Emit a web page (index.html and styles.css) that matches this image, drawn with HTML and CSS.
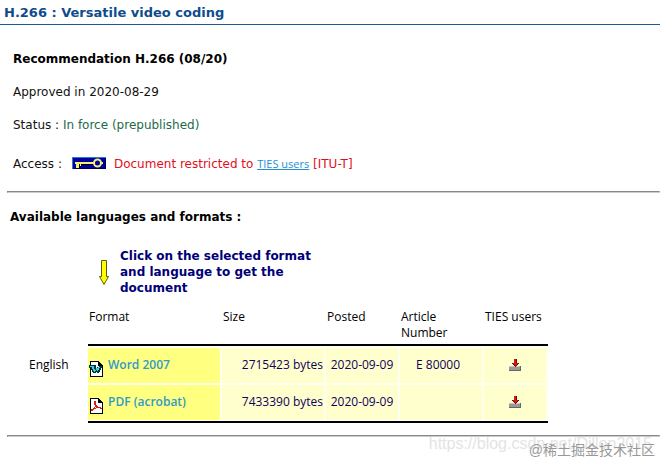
FILE: index.html
```
<!DOCTYPE html>
<html lang="en">
<head>
<meta charset="utf-8">
<title>H.266 : Versatile video coding</title>
<link rel="stylesheet" href="styles.css">
</head>
<body>
<h1 class="title">H.266 : Versatile video coding</h1>
<main>
  <section class="summary">
    <h2>Recommendation H.266 (08/20)</h2>
    <p>Approved in 2020-08-29</p>
    <p>Status : <span class="status">In force (prepublished)</span></p>
    <p class="access">
      <span>Access :</span>
      <svg class="key" viewBox="0 0 34 12" shape-rendering="crispEdges" aria-hidden="true">
        <path fill="#0000a0" d="M0 0h34v12H0z"/>
        <path fill="#2a7ad8" d="M0 0h34v1H0zM0 1h1v11H0z"/>
        <path fill="#00004c" d="M33 1h1v11h-1zM1 11h33v1H1z"/>
        <path fill="#000" d="M5 7h17v1H5zM7 8h1v3H7z"/>
        <path fill="#f4f070" d="M3 5h19v2H3zM4 7h3v4H4zM8 7h1v2H8z"/>
        <ellipse cx="25.500" cy="6" rx="3.500" ry="3.500" fill="none" stroke="#f4f070" stroke-width="2" shape-rendering="auto"/>
        <path fill="#f4f070" d="M29 5h2v2h-2z"/>
      </svg>
      <span class="restricted">Document restricted to <a class="ties" href="#">TIES users</a> [ITU-T]</span>
    </p>
  </section>
  <hr>
  <section class="formats">
    <h2>Available languages and formats :</h2>
    <div class="hint">
      <svg class="arrow" viewBox="0 0 12 25" aria-hidden="true">
        <path d="M3.500 .5h5v16h2L6 24.500 1.500 16.500h2z" fill="#ff0" stroke="#5c5c10"/>
      </svg>
      <p>Click on the selected format and language to get the document</p>
    </div>
    <div class="listing">
      <span class="language">English</span>
      <table>
        <colgroup><col class="c-format"><col class="c-size"><col class="c-posted"><col class="c-article"><col class="c-ties"></colgroup>
        <thead>
          <tr><th>Format</th><th>Size</th><th>Posted</th><th>Article Number</th><th>TIES users</th></tr>
        </thead>
        <tbody>
          <tr>
            <td class="format"><a href="#">
              <svg class="file" viewBox="0 0 14 16" shape-rendering="crispEdges" aria-hidden="true">
                <path fill="#000" d="M1 0h9v1h1v1h1v1h1v1h1v12H1z"/>
                <path fill="#fff" d="M2 1h7v4h4v10H2z"/>
                <path fill="#000" d="M9 1h1v3h3v1H9z"/>
                <path fill="#033" d="M0 4h7v3h1V6h2V5h3v2h-1v2h-1v2h-1v1H8v-1H7v1H4v-1H3V9H2V7H0z"/>
                <path fill="#2fdada" d="M1 5h4v3h1v1h1V7h2V6h2v1h-1v2H9v1H8V9H7v1H6v1H5v-1H4V8H3V6H1z"/>
              </svg>Word 2007</a></td>
            <td class="size">2715423 bytes</td><td class="center">2020-09-09</td><td class="article">E 80000</td>
            <td class="center"><a href="#" aria-label="Download Word 2007">
              <svg class="download" viewBox="0 0 12 12" shape-rendering="crispEdges" aria-hidden="true">
                <path fill="#999" d="M0 7h12v4H0z"/><path fill="#c8c8c8" d="M0 7h12v1H0z"/><path fill="#666" d="M0 11h12v1H0zM11 7h1v5h-1z"/>
                <path fill="#700" d="M5 0h3v4h2v1H9v1H8v1H7v1H6V7H5V6H4V5H3V4h2z"/><path fill="#d01818" d="M5 0h2v4h2v1H8v1H7v1H6V6H5V5H4V4h1z"/>
              </svg></a></td>
          </tr>
          <tr>
            <td class="format"><a href="#">
              <svg class="file" viewBox="0 0 14 16" shape-rendering="crispEdges" aria-hidden="true">
                <path fill="#000" d="M1 0h9v1h1v1h1v1h1v1h1v12H1z"/>
                <path fill="#fff" d="M2 1h7v4h4v10H2z"/>
                <path fill="#000" d="M9 1h1v3h3v1H9z"/>
                <path fill="#e01818" d="M5 3h2v4h1v1h1v1h3v1h1v1h-2v-1H7v1H5v1H4v1H2v-2h2v-1h1V9h1V7H5z"/>
                <path fill="#fff" d="M6 9h1v1H6z"/>
              </svg>PDF (acrobat)</a></td>
            <td class="size">7433390 bytes</td><td class="center">2020-09-09</td><td></td>
            <td class="center"><a href="#" aria-label="Download PDF">
              <svg class="download" viewBox="0 0 12 12" shape-rendering="crispEdges" aria-hidden="true">
                <path fill="#999" d="M0 7h12v4H0z"/><path fill="#c8c8c8" d="M0 7h12v1H0z"/><path fill="#666" d="M0 11h12v1H0zM11 7h1v5h-1z"/>
                <path fill="#700" d="M5 0h3v4h2v1H9v1H8v1H7v1H6V7H5V6H4V5H3V4h2z"/><path fill="#d01818" d="M5 0h2v4h2v1H8v1H7v1H6V6H5V5H4V4h1z"/>
              </svg></a></td>
          </tr>
        </tbody>
      </table>
    </div>
  </section>
  <hr>
</main>
<div class="mark blog">https://blog.csdn.net/Dillon2015</div>
<div class="mark community">@稀土掘金技术社区</div>
</body>
</html>
```
FILE: styles.css
```
* { box-sizing: border-box; }
body {
  position: relative;
  margin: 0;
  min-height: 100vh;
  background: #fff;
  color: #111;
  font: 12px/16px "DejaVu Sans", Verdana, sans-serif;
}
h1, h2, p { margin: 0; font-size: 12px; }
a { color: #2f9bc9; text-decoration: none; }
.title {
  padding: 5px 4px 3px;
  border-bottom: 1px solid #1c5a96;
  color: #0f4c8c;
  font-size: 13px;
}
main { padding-left: 7px; }
h2 { color: #000; }
.summary {
  display: flex;
  flex-direction: column;
  gap: 17px;
  padding: 26px 6px 19px;
}
.status { color: #1d6a48; }
.access { display: flex; align-items: center; padding-top: 6px; }
.key { width: 34px; height: 12px; margin: 0 8px 2px 10px; }
.restricted { color: #e01020; }
.ties {
  color: #1c90d4;
  font-family: "Trebuchet MS", "Open Sans", sans-serif;
  font-size: 11px;
  text-decoration: underline;
}
hr { margin: 0; border: 1px solid; border-color: #888 #ccc #ccc #888; }
.formats { padding: 16px 3px 12px; }
.hint {
  display: flex;
  align-items: center;
  gap: 10px;
  padding: 23px 0 13px 88px;
}
.arrow { width: 12px; height: 25px; }
.hint p { max-width: 200px; color: #000078; font-weight: bold; }
.listing {
  display: flex;
  align-items: flex-start;
  font-family: "Trebuchet MS", "Open Sans", sans-serif;
  font-weight: 500;
}
.language { width: 78px; padding: 48px 0 0 19px; color: #000; }
table {
  width: 460px;
  table-layout: fixed;
  border-spacing: 0;
  padding-bottom: 1px;
  border-bottom: 2px solid #000;
}
.c-format { width: 134px; }
.c-size { width: 104px; }
.c-posted { width: 74px; }
.c-article { width: 84px; }
th {
  height: 37px;
  padding: 0 1px;
  border-bottom: 2px solid #000;
  color: #000;
  font-weight: 500;
  text-align: left;
  vertical-align: top;
}
td {
  height: 37px;
  padding: 0 1px 2px;
  border: solid #fffff0;
  border-width: 2px 2px 0 0;
  background: #ffffce;
  color: #100060;
}
.format { background: #ffff80; }
.format a { display: flex; gap: 5px; font-weight: 600; }
.file { width: 14px; height: 16px; margin-top: 4px; margin-bottom: -4px; }
.size { text-align: right; }
.center { text-align: center; }
.article { padding-left: 16px; }
.download { display: block; width: 12px; height: 12px; margin: 0 auto; }
.mark { position: absolute; white-space: nowrap; }
.blog {
  right: 8px;
  bottom: 9px;
  color: #e4e4e4;
  font: 16px/20px "Liberation Sans", sans-serif;
}
.community {
  right: 5px;
  bottom: 3px;
  color: #999;
  font: 14px/20px "Liberation Sans", "Noto Sans CJK SC", sans-serif;
}
```
